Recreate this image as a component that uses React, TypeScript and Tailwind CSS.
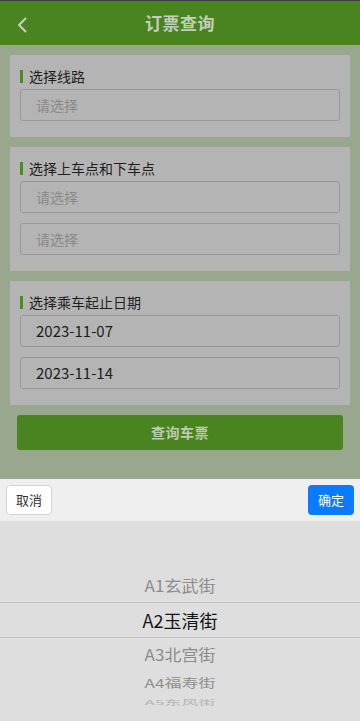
import React from 'react'

const font = { fontFamily: '"Noto Sans CJK SC", "Noto Sans", sans-serif' }

function SectionTitle({ text }: { text: string }) {
  return (
    <div className="flex h-[20px] items-center">
      <span className="mr-[6px] h-[13px] w-[3px] bg-[#4a8d1f]" />
      <span className="text-[14px] leading-[20px] text-[#1e1e1e]">{text}</span>
    </div>
  )
}

function Field({ value, placeholder }: { value?: string; placeholder?: string }) {
  return (
    <div className="flex h-[32px] items-center rounded-[3px] border border-[#999999] px-[15px]">
      {value ? (
        <span className="text-[15px] text-[#1c1c1c]">{value}</span>
      ) : (
        <span className="text-[14px] text-[#8a8a8a]">{placeholder}</span>
      )}
    </div>
  )
}

function Card({ title, children }: { title: string; children: React.ReactNode }) {
  return (
    <div className="bg-[#b4b4b4] px-[10px] pt-[11px] pb-[16px]">
      <SectionTitle text={title} />
      <div className="mt-[3px] flex flex-col gap-[10px]">{children}</div>
    </div>
  )
}

export default function App() {
  return (
    <div className="flex h-[721px] w-[360px] flex-col overflow-hidden bg-[#99a78f]" style={font}>
      {/* Header */}
      <header className="relative flex h-[45px] shrink-0 items-center justify-center border-t border-[#3a3a3a] bg-[#4a8420]">
        <svg
          className="absolute left-[16px] top-[16px]"
          width="12"
          height="16"
          viewBox="0 0 12 16"
          fill="none"
        >
          <path d="M9.5 1.5 L3 8 L9.5 14.5" stroke="#c6d1bf" strokeWidth="2" strokeLinecap="round" strokeLinejoin="round" />
        </svg>
        <h1 className="text-[17px] font-bold tracking-[0.5px] text-[#c3cfbb]">订票查询</h1>
      </header>

      {/* Form */}
      <div className="flex flex-col px-[10px] pt-[10px]">
        <div className="flex flex-col gap-[10px]">
          <Card title="选择线路">
            <Field placeholder="请选择" />
          </Card>
          <Card title="选择上车点和下车点">
            <Field placeholder="请选择" />
            <Field placeholder="请选择" />
          </Card>
          <Card title="选择乘车起止日期">
            <Field value="2023-11-07" />
            <Field value="2023-11-14" />
          </Card>
        </div>
        <button className="mx-[7px] mt-[10px] flex h-[35px] items-center justify-center rounded-[3px] bg-[#4a8420] text-[14px] font-bold tracking-[0.5px] text-[#bccab2]">
          查询车票
        </button>
      </div>

      <div className="flex-1" />

      {/* Picker */}
      <div className="flex h-[242px] shrink-0 flex-col">
        <div className="flex h-[42px] items-center justify-between bg-[#efefef] px-[6px]">
          <button className="flex h-[30px] w-[46px] items-center justify-center rounded-[4px] border border-[#d4d4d4] bg-white text-[13px] text-[#333]">
            取消
          </button>
          <button className="flex h-[30px] w-[46px] items-center justify-center rounded-[4px] bg-[#0a7aff] text-[13px] text-white">
            确定
          </button>
        </div>
        <div className="flex flex-1 flex-col bg-[#dedede] pt-[49px]">
          <div className="flex h-[33px] items-center justify-center border-b border-[#c4c4c4] text-[17px] text-[#8c8c8c]">
            <span className="inline-block scale-y-[0.92]">A1玄武街</span>
          </div>
          <div className="flex h-[35px] items-center justify-center border-b border-[#c4c4c4] text-[18px] text-[#141414]">
            A2玉清街
          </div>
          <div className="flex h-[33px] items-center justify-center text-[17px] text-[#8c8c8c]">
            <span className="inline-block scale-y-[0.92]">A3北宫街</span>
          </div>
          <div className="flex h-[24px] items-center justify-center text-[17px] text-[#8f8f8f]">
            <span className="inline-block scale-y-[0.72]">A4福寿街</span>
          </div>
          <div className="flex h-[14px] items-center justify-center overflow-hidden text-[17px] text-[#b4b4b4]">
            <span className="inline-block scale-y-[0.4]">A5东风街</span>
          </div>
        </div>
      </div>
    </div>
  )
}
